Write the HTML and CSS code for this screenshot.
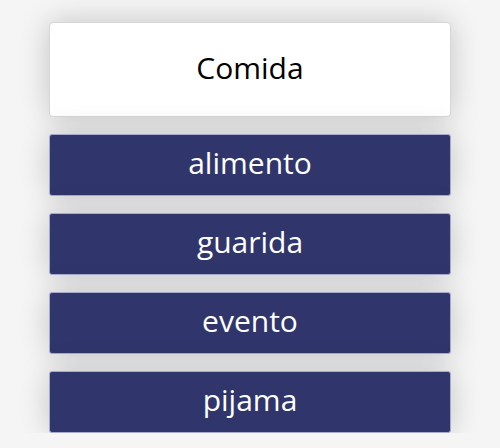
FILE: index.html
```html
<!DOCTYPE html>
<html lang="es">
<head>
<meta charset="utf-8">
<link rel="stylesheet" href="styles.css">
</head>
<body>
<div class="quiz">
  <div class="prompt">Comida</div>
  <div class="options">
    <button class="option">alimento</button>
    <button class="option">guarida</button>
    <button class="option">evento</button>
    <button class="option">pijama</button>
  </div>
</div>
</body>
</html>
```

FILE: styles.css
```css
html, body {
  margin: 0;
  padding: 0;
  background: #f5f5f5;
  font-family: "Open Sans", "Noto Sans", sans-serif;
}
.quiz {
  width: 402px;
  margin: 22px auto 0;
  display: flex;
  flex-direction: column;
  gap: 17px;
}
.prompt {
  box-sizing: border-box;
  height: 95px;
  background: #fff;
  border: 1px solid #d6d6d6;
  border-radius: 4px;
  display: flex;
  align-items: center;
  justify-content: center;
  padding-bottom: 5px;
  font-size: 30px;
  font-weight: 500;
  color: #000;
  box-shadow: 0 0 30px rgba(0,0,0,0.2);
}
.options {
  display: flex;
  flex-direction: column;
  gap: 17px;
}
.option {
  box-sizing: border-box;
  height: 62px;
  background: #30366b;
  border: 1px solid #a7abd0;
  border-radius: 3px;
  color: #fff;
  font-family: "Open Sans", "Noto Sans", sans-serif;
  font-size: 30px;
  font-weight: 500;
  padding: 0 0 5px;
  box-shadow: 0 0 30px rgba(0,0,0,0.2);
}
```
